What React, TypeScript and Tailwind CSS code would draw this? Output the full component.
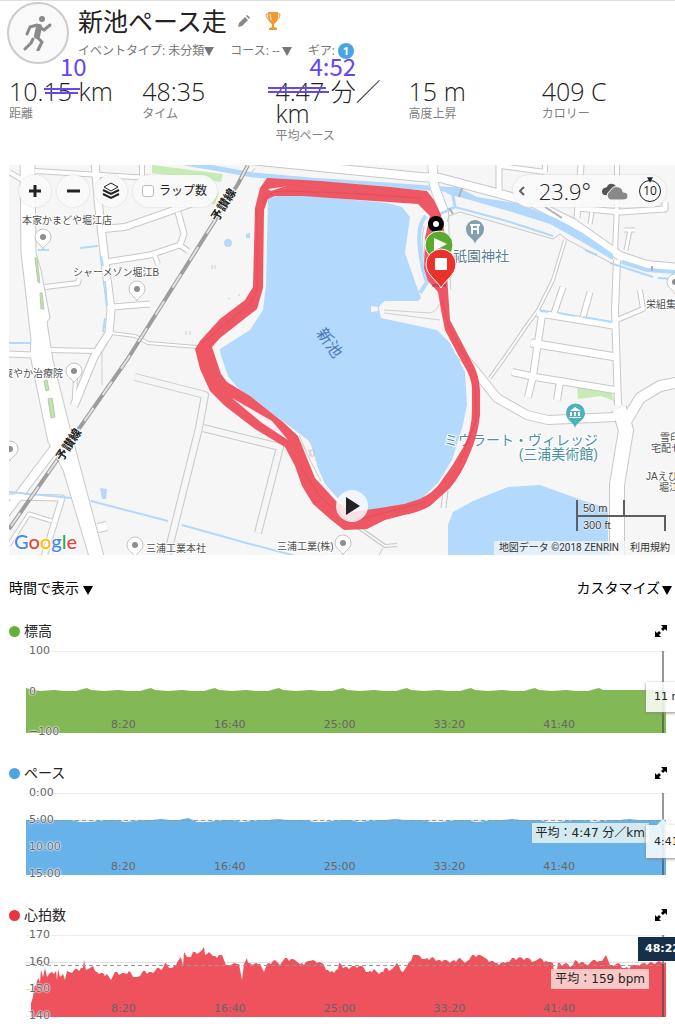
import { useState } from 'react';

interface Stat {
  value: string;
  label: string;
}

interface Road {
  d: string;
  w: number;
}

interface Place {
  x: number;
  y: number;
  name: string;
  pinX?: number;
  pinY?: number;
}

const stats: Stat[] = [
  { value: '10.15 km', label: '距離' },
  { value: '48:35', label: 'タイム' },
  { value: '4:47 分／ km', label: '平均ペース' },
  { value: '15 m', label: '高度上昇' },
  { value: '409 C', label: 'カロリー' },
];

const roads: Road[] = [
  { d: 'M9 172 L26 182 M24 190 L26 205', w: 4 },
  { d: 'M35 171 L150 178 M142 165 V185', w: 4 },
  { d: 'M95 160 L98 200 L106 270 L111 310 L109 333 L94 357 L74 406', w: 7 },
  { d: 'M76 368 L74 406', w: 3 },
  { d: 'M103 229 L125 227 L165 213 L215 195', w: 6 },
  { d: 'M106 262 L150 255 L180 245 L184 234 L178 212', w: 5 },
  { d: 'M180 245 L188 251 M154 254 L158 264', w: 4 },
  { d: 'M45 287 L78 283 L79 279', w: 4 },
  { d: 'M112 307 L150 304', w: 5 },
  { d: 'M111 333 L135 336 L148 343 L197 347', w: 2 },
  { d: 'M50 350 L95 351', w: 4 },
  { d: 'M9 354 L32 355', w: 5 },
  { d: 'M5 514 L56 446', w: 8 },
  { d: 'M9 497 L62 498 L43 560', w: 5 },
  { d: 'M9 545 L29 514 L52 521', w: 3 },
  { d: 'M98 528 L107 526', w: 8 },
  { d: 'M250 160 L420 177 L440 178 L497 193 L533 203 L573 223 L620 256 L647 265 L680 268', w: 8 },
  { d: 'M432 160 L434 185 L444 212 L446 290', w: 8 },
  { d: 'M499 160 L499 190', w: 5 },
  { d: 'M545 160 L545 172 M545 172 L500 166 M617 160 L617 205 L615 252', w: 4 },
  { d: 'M581 165 L577 218 M577 208 L620 212 L665 209 L665 202', w: 5 },
  { d: 'M592 212 L590 224 M630 230 L626 250 M624 230 L635 230', w: 3 },
  { d: 'M565 240 L553 280 L538 310 L525 328 L510 350 L490 378', w: 2 },
  { d: 'M563 287 L554 313 M590 292 L583 317', w: 5 },
  { d: 'M537 313 L616 326 M542 315 L533 376 L528 397', w: 6 },
  { d: 'M531 343 L616 357', w: 7 },
  { d: 'M512 372 L535 377 L615 390 M560 382 L557 400', w: 6 },
  { d: 'M617 320 L643 309 L640 290', w: 4 },
  { d: 'M617 260 L615 310 L618 405', w: 6 },
  { d: 'M448 340 L473 368 L497 398 L527 415 L548 420 L615 417', w: 8 },
  { d: 'M619 408 L626 430 L617 485 L617 560', w: 14 },
  { d: 'M624 425 L640 398 L660 386 L680 382', w: 10 },
];

// paths without a white surface
const lanes: Road[] = [
  { d: 'M135 377 L205 395 L199 428 L166 560', w: 6 },
  { d: 'M203 428 L280 447 L258 533', w: 6 },
  { d: 'M355 525 L385 546 L397 545', w: 2 },
];

const places: Place[] = [
  { x: 22, y: 224, name: '本家かまどや堀江店', pinX: 43, pinY: 237 },
  { x: 73, y: 276, name: 'シャーメゾン堀江B', pinX: 137, pinY: 289 },
  { x: 3, y: 377, name: '爽やか治療院', pinX: 74, pinY: 371 },
  { x: 146, y: 552, name: '三浦工業本社', pinX: 135, pinY: 545 },
  { x: 277, y: 550, name: '三浦工業(株)', pinX: 343, pinY: 543 },
  { x: 646, y: 308, name: '栄組集会所', pinX: 675, pinY: 282 },
  { x: 660, y: 441, name: '雪印メグ' },
  { x: 651, y: 452, name: '宅配センター' },
  { x: 646, y: 480, name: 'JAえひめ' },
  { x: 659, y: 491, name: '堀江支所' },
];

const heartRate: [number, number][] = [
  [5, 68], [7, 62], [8, 52], [10, 50], [12, 43], [14, 47], [15, 35], [17, 42], [19, 33], [21, 42],
  [24, 38], [30, 36], [31, 45], [32, 34], [34, 42], [37, 39], [39, 45], [41, 36], [46, 38], [49, 34],
  [57, 33], [58, 25], [60, 35], [64, 33], [67, 31], [69, 36], [75, 38], [81, 39], [85, 45], [89, 37],
  [96, 38], [101, 39], [103, 36], [109, 42], [114, 41], [117, 36], [127, 38], [131, 33], [137, 33],
  [139, 28], [146, 33], [152, 26], [155, 22], [157, 31], [158, 17], [161, 22], [165, 22], [167, 17],
  [174, 17], [178, 12], [179, 20], [183, 17], [187, 21], [196, 20], [200, 30], [209, 28], [213, 29],
  [216, 45], [218, 29], [221, 23], [222, 28], [234, 29], [238, 37], [241, 29], [249, 25], [254, 30],
  [259, 23], [269, 25], [274, 29], [287, 25], [296, 28], [304, 37], [312, 34], [313, 28], [319, 32],
  [336, 31], [342, 37], [348, 34], [353, 39], [359, 33], [366, 34], [371, 28], [377, 37], [381, 31],
  [387, 20], [392, 20], [399, 24], [406, 22], [412, 25], [426, 26], [434, 23], [439, 28], [446, 20],
  [454, 20], [459, 23], [469, 28], [479, 28], [486, 23], [502, 23], [509, 26], [514, 23], [522, 27],
  [527, 28], [529, 47], [532, 28], [547, 30], [549, 25], [562, 30], [567, 25], [576, 26], [580, 20],
  [584, 30], [592, 28], [599, 33], [609, 30], [617, 28], [640, 27],
];

// fill the longer gaps between samples with small steps
const heartPath = () => {
  let d = 'M5 82';
  heartRate.forEach(([x, y], i) => {
    d += ` L${x} ${y}`;
    const next = heartRate[i + 1];
    if (!next) return;
    let n = 0;
    for (let px = x + 2; px < next[0] - 1; px += 2) {
      const t = (px - x) / (next[0] - x);
      const step = [0, 2, 0, -1][n % 4];
      d += ` L${px} ${Math.round(y + (next[1] - y) * t) + step}`;
      n += 1;
    }
  });
  return d + ' L640 82 Z';
};

const elevationPath = () => {
  let d = 'M0 82 L0 37 L8 39';
  for (let x = 14; x <= 560; x += 64) {
    d += ` L${x} 40 L${x + 14} 39 L${x + 24} 40 L${x + 36} 40 L${x + 43} 38 L${x + 47} 37 L${x + 51} 39`;
  }
  return d + ' L640 39 L640 82 Z';
};

const pacePath = () => {
  let d = 'M0 82 L0 27';
  const steps = [27, 27, 26, 27, 27, 27, 29, 29, 28, 27, 27, 29, 28];
  for (let i = 1; i < 71; i++) {
    d += ` L${i * 9} ${i === 18 ? 25 : steps[i % steps.length]}`;
  }
  return d + ' L640 27 L640 82 Z';
};

const times = ['8:20', '16:40', '25:00', '33:20', '41:40'];

function Triangle({ className }: { className: string }) {
  return (
    <svg viewBox="0 0 10 9" className={className} aria-hidden="true">
      <path d="M0 0 H10 L5 9 Z" fill="currentColor" />
    </svg>
  );
}

function MapPin({ x, y }: { x: number; y: number }) {
  return (
    <g transform={`translate(${x} ${y})`}>
      <path d="M0 12 C-1 8 -8 6 -8 0 A8 8 0 0 1 8 0 C8 6 1 8 0 12 Z" fill="#fff" stroke="#c4c4c4" />
      <circle r="3" fill="#8e8e8e" />
    </g>
  );
}

function ActivityMap() {
  return (
    <svg
      viewBox="9 165 666 390"
      preserveAspectRatio="xMinYMin slice"
      className="block h-full w-full font-['Liberation_Sans','Noto_Sans_CJK_JP',sans-serif]"
      role="img"
      aria-label="ルート地図"
    >
      <rect x="9" y="165" width="2000" height="390" fill="#f6f6f6" />

      {/* 緑地 */}
      <g fill="#c8ebb5">
        <path d="M152 165 L223 174 L221 182 L152 173 Z M211 204 L220 190 L215 204 Z" />
        <path d="M577 387 L612 393 L614 401 L601 396 L578 399 Z" />
      </g>

      {/* 道路 */}
      <g fill="none" stroke="#c8c8c8" strokeLinejoin="round">
        {roads.map((road) => (
          <path key={road.d} d={road.d} strokeWidth={road.w + 2} />
        ))}
        {lanes.map((lane) => (
          <path key={lane.d} d={lane.d} strokeWidth={lane.w + 2} />
        ))}
      </g>
      <path d="M20 160 L21 252 L31 340 L30 355 L48 442 L63 470 L90 560 L105 560 L70 428 L53 360 L47 322 L50 318 L41 270 L36 253 L35 160 Z" fill="#fff" stroke="#c8c8c8" />
      <g fill="none" stroke="#f6f6f6" strokeLinejoin="round">
        {lanes.map((lane) => (
          <path key={lane.d} d={lane.d} strokeWidth={lane.w} />
        ))}
      </g>
      <g fill="none" stroke="#fff" strokeLinejoin="round">
        {roads.map((road) => (
          <path key={road.d} d={road.d} strokeWidth={road.w} />
        ))}
      </g>

      {/* 水路 */}
      <g fill="none" stroke="#b2d9fb">
        <path d="M185 163 L220 169 L253 175 L310 180 L387 185 L457 190" strokeWidth="5" />
        <path d="M455 207 L507 221 L553 236 M585 250 L597 255 M610 263 L653 277 M658 278 L675 279 M540 311 L548 312 M559 313 L575 316 M583 317 L612 322" strokeWidth="2" />
        <path d="M452 190 L455 207 M440 214 L455 207" strokeWidth="3" />
        <path d="M9 343 H31 M80 248 L98 246 M38 250 H49 M101 256 L103 266 M105 281 L107 306 M105 318 L103 332 M91 501 L168 521 M182 525 L250 544 L300 557 M9 492 L72 498" strokeWidth="2" />
      </g>
      <path d="M440 187 L457 187 L477 197 L520 204 L557 219 L583 233 L613 254 L613 260 L577 239 L550 224 L512 212 L470 200 L448 194 Z" fill="#b2d9fb" />
      <path d="M622 262 L647 270 L675 272" fill="none" stroke="#b2d9fb" strokeWidth="4" />
      <path d="M432 160 L434 185 L441 205" fill="none" stroke="#fff" strokeWidth="8" />
      <path d="M447 222 L449 216 L460 212 L553 239 L560 234 L566 239 L613 264" fill="none" stroke="#c8c8c8" />
      <path d="M462 188 L459 197 M449 208 L453 214 M652 266 V271 M545 207 L562 218" fill="none" stroke="#b0b0b0" strokeWidth="2" />
      <g fill="#bfe5ad" stroke="#b8c9b0">
        <path d="M35 258 H37 L40 283 L38 282 Z M40 293 L42 293 L44 309 L41 309 Z M44 381 L47 380 L49 390 L46 391 Z M48 399 L52 398 L55 417 L51 418 Z" />
      </g>

      {/* 鉄道 */}
      <path d="M248 165 L238 184 L127 360 L9 529" fill="none" stroke="#9d9d9d" strokeWidth="4" />
      <path d="M248 165 L238 184 L127 360 L9 529" fill="none" stroke="#e2e2e2" strokeWidth="2" strokeDasharray="16 16" />

      {/* 池 */}
      <g fill="#b3d9fc">
        <path d="M268 199 L280 195 L303 195 L387 203 L402 207 L410 217 L405 253 L418 290 L421 298 L418 301 L385 301 Q379 304 379 309 L381 318 L395 321 L437 330 L450 343 L465 372 L467 405 L463 425 L452 460 L438 483 L420 500 L380 510 L350 512 L325 484 L318 468 L311 445 L308 440 L288 425 L238 388 L228 376 L221 356 L220 349 L250 330 L263 310 L266 285 Z" />
        <path d="M448 555 L448 525 L453 512 L473 501 L508 487 L540 485 L587 502 L608 508 V555 Z" />
        <circle cx="228" cy="243" r="4" />
        <path d="M246 234 L250 233 V238 H246 Z M100 488 L107 489 L106 499 L102 499 Z" />
      </g>
      <path d="M426 216 Q417 224 420 250 Q422 270 427 282 L420 293" fill="none" stroke="#b3d9fc" strokeWidth="4" />
      <path d="M371 306 L378 307 L378 311 L371 312 Z" fill="#f6f6f6" />
      <path d="M384 310 L430 313 Q437 311 439 304 M384 313 L440 320 M424 226 Q420 245 425 262 M308 450 L312 455 M299 435 L310 460 L321 481 M290 430 L306 450" fill="none" stroke="#cfcfcf" />
      <path d="M310 450 h4 v6 h-4 z M443 490 l-2 18 M448 490 l-2 18 M383 548 l-4 7" fill="none" stroke="#c6c6c6" />
      <g stroke="#cfcfcf" fill="none">
        <path d="M212 265 v4 M215 265 v4 M186 331 v4 M190 331 v4 M102 351 V385 M228 298 l2 1 M238 296 l2 -2 M249 176 l6 -8" />
      </g>

      <g fontSize="14" fill="#4b93a0" stroke="#fff" strokeWidth="2" paintOrder="stroke" textAnchor="end">
        <text x="598" y="445">ミウラート・ヴィレッジ</text>
        <text x="598" y="459">(三浦美術館)</text>
      </g>

      {/* 走行ルート */}
      <path
        fillRule="evenodd"
        fill="#ed4b58"
        opacity=".93"
        d="M267 178 L320 181 L390 187 L427 191 L434 200 L441 215 L445 235 L448 290 L450 320 L462 343 L474 366 Q479 376 480 390 L480 415 Q478 435 470 453 Q462 474 450 488 L430 506 Q420 512 404 515 L385 520 L367 529 L344 530 L330 519 L313 504 L302 486 L295 466 L285 447 L255 429 L225 406 L210 391 L200 369 L195 349 L200 341 L220 319 L245 300 L253 287 L255 208 L260 188 Z
        M275 196 L268 199 L264 210 L263 288 L257 309 L220 338 L212 347 L221 374 L227 382 L250 396 L283 422 L298 436 L315 478 L336 501 L352 512 L380 508 L404 504 L420 499 Q434 492 440 483 L452 466 L464 446 Q472 430 472 410 L472 388 Q471 377 465 367 L457 353 L445 330 L441 310 L438 292 L428 281 L424 268 L425 238 L430 216 L418 204 L345 199 L303 196 Z"
      />
      <path d="M232 398 L272 421 L288 440 L262 423 Z" fill="#fbf3f3" />
      <path d="M268 189 L288 186 L283 187 L271 191 Z" fill="#fbf3f3" />
      <path d="M263 204 Q266 191 283 191 L345 193 L422 198 M257 210 L257 290 L250 304 L202 343 M300 465 L320 497 L350 522 L425 502 M475 385 L476 420 L460 462 M442 300 L448 325 L468 362" fill="none" stroke="#d84351" opacity=".5" />

      <path d="M432 284 h14 v3 h-14 z" fill="#8e2b31" opacity=".4" />

      {/* 地名 */}
      {places.map((place) =>
        place.pinX !== undefined && place.pinY !== undefined ? (
          <MapPin key={place.name} x={place.pinX} y={place.pinY} />
        ) : null
      )}
      <MapPin x={10} y={449} />
      <g fontSize="10" fill="#4f4f4f" stroke="#fff" strokeWidth="2" paintOrder="stroke">
        {places.map((place) => (
          <text key={place.name} x={place.x} y={place.y}>{place.name}</text>
        ))}
      </g>
      <g fontSize="12" fontWeight="700" fill="#222" stroke="#fff" strokeWidth="2" paintOrder="stroke" textAnchor="middle">
        <text transform="translate(227 207) rotate(-58)">予讃線</text>
        <text transform="translate(72 447) rotate(-56)">予讃線</text>
      </g>
      <text transform="translate(325 346) rotate(55)" fontSize="16" textAnchor="middle" fill="#4c78b5">新池</text>

      <path d="M475 244 C474 238 466 237 466 229 A9 9 0 0 1 484 229 C484 237 476 238 475 244 Z" fill="#829fb0" />
      <path d="M470 225 H480 M471 229 H479 M472 225 V234 M478 225 V234" stroke="#fff" strokeWidth="2" />
      <text x="453" y="261" fontSize="14" fill="#5c7f93" stroke="#fff" strokeWidth="2" paintOrder="stroke">祇園神社</text>
      <path d="M575 428 C574 422 566 421 566 413 A9 9 0 0 1 585 413 C585 421 576 422 575 428 Z" fill="#4db0bf" />
      <path d="M570 411 L575 407 L581 411 Z M570 412 h2 v4 h-2 z M574 412 h2 v4 h-2 z M578 412 h2 v4 h-2 z M569 417 h12 v1 h-12 z" fill="#fff" />

      <circle cx="436" cy="224" r="8" fill="#000" />
      <circle cx="436" cy="224" r="3" fill="#fff" />
      <circle cx="439" cy="245" r="14" fill="#5aaa2f" stroke="#fff" />
      <path d="M434 238 L447 244 L434 251 Z" fill="#fff" />
      <path d="M441 288 C437 280 426 275 426 264 A15 15 0 0 1 456 264 C456 275 445 280 441 288 Z" fill="#e9322e" stroke="#fff" />
      <path d="M435 258 h12 v12 h-12 z" fill="#fff" />

      <path d="M577 500 V531 M577 516 H665 V531 M624 500 V516" fill="none" stroke="#5f5f5f" strokeWidth="2" />
      <g fontSize="11" fill="#333" stroke="#fff" strokeWidth="1" paintOrder="stroke">
        <text x="583" y="512">50 m</text>
        <text x="583" y="529">300 ft</text>
      </g>
      <text x="14" y="549" fontSize="20" fontWeight="500" className="font-['Lato',sans-serif]" stroke="#fff" strokeWidth="2" paintOrder="stroke">
        <tspan fill="#4285f4">G</tspan>
        <tspan fill="#ea4335">o</tspan>
        <tspan fill="#fbbc05">o</tspan>
        <tspan fill="#4285f4">g</tspan>
        <tspan fill="#34a853">l</tspan>
        <tspan fill="#ea4335">e</tspan>
      </text>
    </svg>
  );
}

function ChartSection({
  title,
  dot,
  fill,
  path,
  yLabels,
  average,
  children,
}: {
  title: string;
  dot: string;
  fill: string;
  path: string;
  yLabels: string[];
  average?: number;
  children: React.ReactNode;
}) {
  return (
    <section className="mb-[30px]">
      <div className="flex h-5 items-center pr-2">
        <span className={`mr-1 h-[11px] w-[11px] rounded-full ${dot}`} />
        <h2 className="text-[14px] leading-5 text-[#222]">{title}</h2>
        <button type="button" aria-label={`${title}を拡大`} className="ml-auto">
          <svg viewBox="0 0 12 12" className="h-3 w-3">
            <path d="M6 0 H12 V6 L10 4 L8 6 L6 4 L8 2 Z M0 6 L2 8 L4 6 L6 8 L4 10 L6 12 H0 Z" fill="#000" />
          </svg>
        </button>
      </div>
      <div className="relative mt-[10px] mr-[9px] ml-[17px] h-[82px] font-['DejaVu_Sans','Noto_Sans_CJK_JP',sans-serif] text-[11px] leading-4 text-[#666]">
        <svg viewBox="0 0 640 82" preserveAspectRatio="none" className="block h-full w-full" aria-hidden="true">
          {yLabels.map((label, i) => {
            const y = (82 / (yLabels.length - 1)) * i;
            return <line key={label} x1="0" x2="640" y1={y} y2={y} stroke="#dcdcdc" />;
          })}
          <path d={path} fill={fill} />
          {average !== undefined && (
            <line x1="0" x2="640" y1={average} y2={average} stroke="#999" strokeDasharray="4 3" />
          )}
          <line x1="637" x2="637" y1="0" y2="82" stroke="#333" />
        </svg>
        <div className="absolute -top-2 -bottom-[7px] left-[3px] flex flex-col justify-between [text-shadow:0_0_2px_#fff,0_0_2px_#fff,0_0_1px_#fff]">
          {yLabels.map((label) => (
            <span key={label}>{label}</span>
          ))}
        </div>
        <div className="absolute inset-x-0 bottom-0 flex">
          {times.map((time) => (
            <span key={time} className="w-[17.16%] text-right">{time}</span>
          ))}
        </div>
        {children}
      </div>
    </section>
  );
}

export default function App() {
  const [showLaps, setShowLaps] = useState(false);

  return (
    <div className="min-h-screen overflow-hidden border-t border-[#e0e0e0] bg-white pl-[9px] font-['Open_Sans','Noto_Sans_CJK_JP',sans-serif] text-[#222]">
      {/* ヘッダー */}
      <header className="-ml-[2px] flex pt-px">
        <div className="flex h-[62px] w-[62px] shrink-0 items-center justify-center rounded-full border-2 border-[#ccc] bg-[#f9f9f9]">
          <svg viewBox="0 0 30 36" className="h-9 w-[30px]" fill="none" stroke="#8a8a8a" strokeLinecap="round" strokeLinejoin="round">
            <circle cx="19" cy="4" r="3" fill="#8a8a8a" stroke="none" />
            <path d="M4 19 L7 12 L14 10 L21 15 L27 10" strokeWidth="3" />
            <path d="M16 12 L14 21" strokeWidth="6" />
            <path d="M14 22 L19 27 L15 35" strokeWidth="3" />
            <path d="M10 24 L8 28 L2 34" strokeWidth="3" />
          </svg>
        </div>
        <div className="ml-[9px]">
          <div className="flex h-[37px] items-center">
            <h1 className="text-[25px] leading-9">新池ペース走</h1>
            <button type="button" aria-label="名前を編集" className="ml-[11px]">
              <svg viewBox="0 0 12 12" className="h-3 w-3" fill="#868686">
                <path d="M0 12 L1 8 L7 2 L10 5 L4 11 Z M8 1 L9 0 Q10 0 12 3 L11 4 Z" />
              </svg>
            </button>
            <svg viewBox="0 0 16 18" className="ml-[15px] h-[18px] w-4" fill="#ee9c30">
              <path d="M3 0 H13 V5 Q13 10 9 12 V15 L12 16 V18 H4 V16 L7 15 V12 Q3 10 3 5 Z" />
              <path d="M4 2 H1 Q1 7 6 9 M12 2 H15 Q15 7 10 9" fill="none" stroke="#ee9c30" />
              <path d="M5 2 L6 8" stroke="#fff" />
            </svg>
          </div>
          <div className="mt-[2px] flex items-center text-[12px] leading-5 text-[#777]">
            <button type="button" className="flex items-center">
              イベントタイプ: 未分類
              <Triangle className="h-[9px] w-[10px]" />
            </button>
            <button type="button" className="ml-4 flex items-center">
              コース: --
              <Triangle className="ml-[2px] h-[9px] w-[10px]" />
            </button>
            <span className="ml-4">ギア:</span>
            <button type="button" className="ml-[3px] h-4 w-4 rounded-full bg-[#46a5e5] text-center text-[11px] leading-4 font-bold text-white">1</button>
          </div>
        </div>
      </header>

      {/* 統計 */}
      <dl className="relative mt-4 grid grid-cols-5">
        {stats.map((stat) => (
          <div key={stat.label} className="flex flex-col pr-4">
            <dd className="-mr-4 text-[25px] leading-[22px] font-light">{stat.value}</dd>
            <dt className="mt-1 text-[12px] leading-4 text-[#808080]">{stat.label}</dt>
          </div>
        ))}
        {/* 手書きの訂正 */}
        <div className="pointer-events-none absolute inset-x-0 -top-[26px] grid grid-cols-5 font-['Noto_Sans_CJK_JP',sans-serif] text-[24px] leading-6 text-[#6347f5]">
          <div className="pl-[51px]">
            10
            <svg viewBox="0 0 40 8" className="-ml-4 mt-[9px] block h-2 w-10" stroke="#6347f5" strokeWidth="2">
              <path d="M0 2 H36 M1 6 H34" />
            </svg>
          </div>
          <div className="col-start-3 pl-[34px]">
            4:52
            <svg viewBox="0 0 62 8" className="-ml-[42px] mt-2 block h-2 w-[62px]" stroke="#6347f5" strokeWidth="2">
              <path d="M1 2 H59 M1 6 H62" />
            </svg>
          </div>
        </div>
      </dl>

      {/* 地図 */}
      <div className="relative mt-[21px] h-[390px] overflow-hidden">
        <ActivityMap />
        <div className="absolute top-[10px] left-[10px] flex gap-[6px]">
          <button type="button" aria-label="拡大" className="flex h-8 w-8 items-center justify-center rounded-full bg-[#fafafa]/90 shadow-[0_0_2px_#ccc]">
            <svg viewBox="0 0 14 14" className="h-[14px] w-[14px]" stroke="#222" strokeWidth="3">
              <path d="M7 1 V13 M1 7 H13" />
            </svg>
          </button>
          <button type="button" aria-label="縮小" className="flex h-8 w-8 items-center justify-center rounded-full bg-[#fafafa]/90 shadow-[0_0_2px_#ccc]">
            <svg viewBox="0 0 14 14" className="h-[14px] w-[14px]" stroke="#222" strokeWidth="3">
              <path d="M1 7 H14" />
            </svg>
          </button>
          <button type="button" aria-label="レイヤー" className="flex h-8 w-8 items-center justify-center rounded-full bg-[#fafafa]/90 shadow-[0_0_2px_#ccc]">
            <svg viewBox="0 0 18 18" className="h-[18px] w-[18px]" fill="none" stroke="#222" strokeWidth="2">
              <path d="M9 1 L16 5 L9 9 L2 5 Z" strokeWidth="1" />
              <path d="M1 8 L9 12 L17 8 M1 12 L9 16 L17 12" />
            </svg>
          </button>
          <label className="flex h-8 items-center gap-[5px] rounded-full bg-[#fafafa]/90 pr-[10px] pl-[9px] text-[12px] shadow-[0_0_2px_#ccc]">
            <input
              type="checkbox"
              checked={showLaps}
              onChange={(e) => setShowLaps(e.target.checked)}
              className="h-3 w-3 appearance-none rounded-[3px] border border-[#bbb] bg-white checked:bg-[#46a5e5]"
            />
            ラップ数
          </label>
        </div>

        <div className="absolute top-[10px] right-[9px] flex h-8 items-center rounded-full bg-[#fafafa]/90 pr-[5px] pl-[6px] shadow-[0_0_2px_#ccc]">
          <button type="button" aria-label="天気を閉じる">
            <svg viewBox="0 0 6 10" className="h-[10px] w-[6px]" fill="none" stroke="#666" strokeWidth="2">
              <path d="M5 1 L1 5 L5 9" />
            </svg>
          </button>
          <span className="ml-[14px] text-[22px] font-light">23.9°</span>
          <svg viewBox="0 0 28 17" className="ml-[9px] h-[17px] w-7">
            <path d="M4 12 A4 4 0 0 1 4 5 Q7 5 8 2 Q12 -1 16 3 L17 9 L9 12 Z" fill="#555" />
            <path d="M10 17 A5 5 0 0 1 10 8 Q13 2 19 4 Q23 5 23 9 Q28 9 28 13 Q28 17 23 17 Z" fill="#888" stroke="#fff" strokeWidth="1" />
          </svg>
          <div className="relative ml-[11px] flex h-[22px] w-[22px] items-center justify-center rounded-full border border-[#222] text-[12px]">
            10
            <Triangle className="absolute -top-1 left-[7px] h-[6px] w-[6px]" />
          </div>
        </div>

        <button type="button" aria-label="再生" className="absolute bottom-[33px] left-[327px] flex h-8 w-8 items-center justify-center rounded-full bg-[#fafafa]/85">
          <svg viewBox="0 0 14 18" className="ml-[2px] h-[18px] w-[14px]">
            <path d="M0 0 L14 9 L0 18 Z" fill="#222" />
          </svg>
        </button>

        <div className="absolute right-0 bottom-0 flex gap-[11px] bg-[#f5f5f5]/75 pr-[5px] pl-[5px] font-['Roboto','Noto_Sans_CJK_JP',sans-serif] text-[10px] leading-[14px] text-[#333]">
          <span>地図データ ©2018 ZENRIN</span>
          <a href="#terms">利用規約</a>
        </div>
      </div>

      <div className="mt-[23px] mb-[23px] flex justify-between pr-[3px] text-[14px] leading-5 text-black">
        <button type="button" className="flex items-center gap-1">
          時間で表示
          <Triangle className="mt-1 h-[9px] w-[10px]" />
        </button>
        <button type="button" className="flex items-center gap-[2px]">
          カスタマイズ
          <Triangle className="mt-1 h-[9px] w-[10px]" />
        </button>
      </div>

      <ChartSection title="標高" dot="bg-[#68ae38]" fill="#82b855" path={elevationPath()} yLabels={['100', '0', '−100']}>
        <div className="absolute top-[31px] -right-[44px] h-[30px] w-16 bg-white/85 pl-2 leading-[30px] text-[#222] shadow-[0_1px_3px_#888]">11 m</div>
      </ChartSection>

      <ChartSection title="ペース" dot="bg-[#4aa5e5]" fill="#67b3e9" path={pacePath()} yLabels={['0:00', '5:00', '10:00', '15:00']} average={27.5}>
        <div className="absolute top-[30px] right-[17px] bg-[#d3eaf0] px-1 text-[12px] leading-5 text-[#222]">平均：4:47 分／km</div>
        <div className="absolute top-[32px] -right-[44px] h-[33px] w-16 bg-white/85 pl-2 leading-[33px] text-[#222] shadow-[0_1px_3px_#888]">
          4:41
          <svg viewBox="0 0 12 6" className="absolute -top-[6px] left-[11px] h-[6px] w-3">
            <path d="M0 6 L6 0 L12 6 Z" fill="#e8f3fb" />
          </svg>
        </div>
      </ChartSection>

      <div className="-mb-6">
        <ChartSection title="心拍数" dot="bg-[#e9333f]" fill="#ed525d" path={heartPath()} yLabels={['170', '160', '150', '140']} average={30.5}>
          <div className="absolute top-[34px] right-[17px] bg-[#f8c9c6] px-1 text-[12px] leading-5 text-[#222]">平均：159 bpm</div>
          <div className="absolute top-[2px] -right-[44px] h-6 w-[72px] bg-[#17304a] pl-[7px] leading-6 font-bold text-white">48:22</div>
        </ChartSection>
      </div>
    </div>
  );
}
